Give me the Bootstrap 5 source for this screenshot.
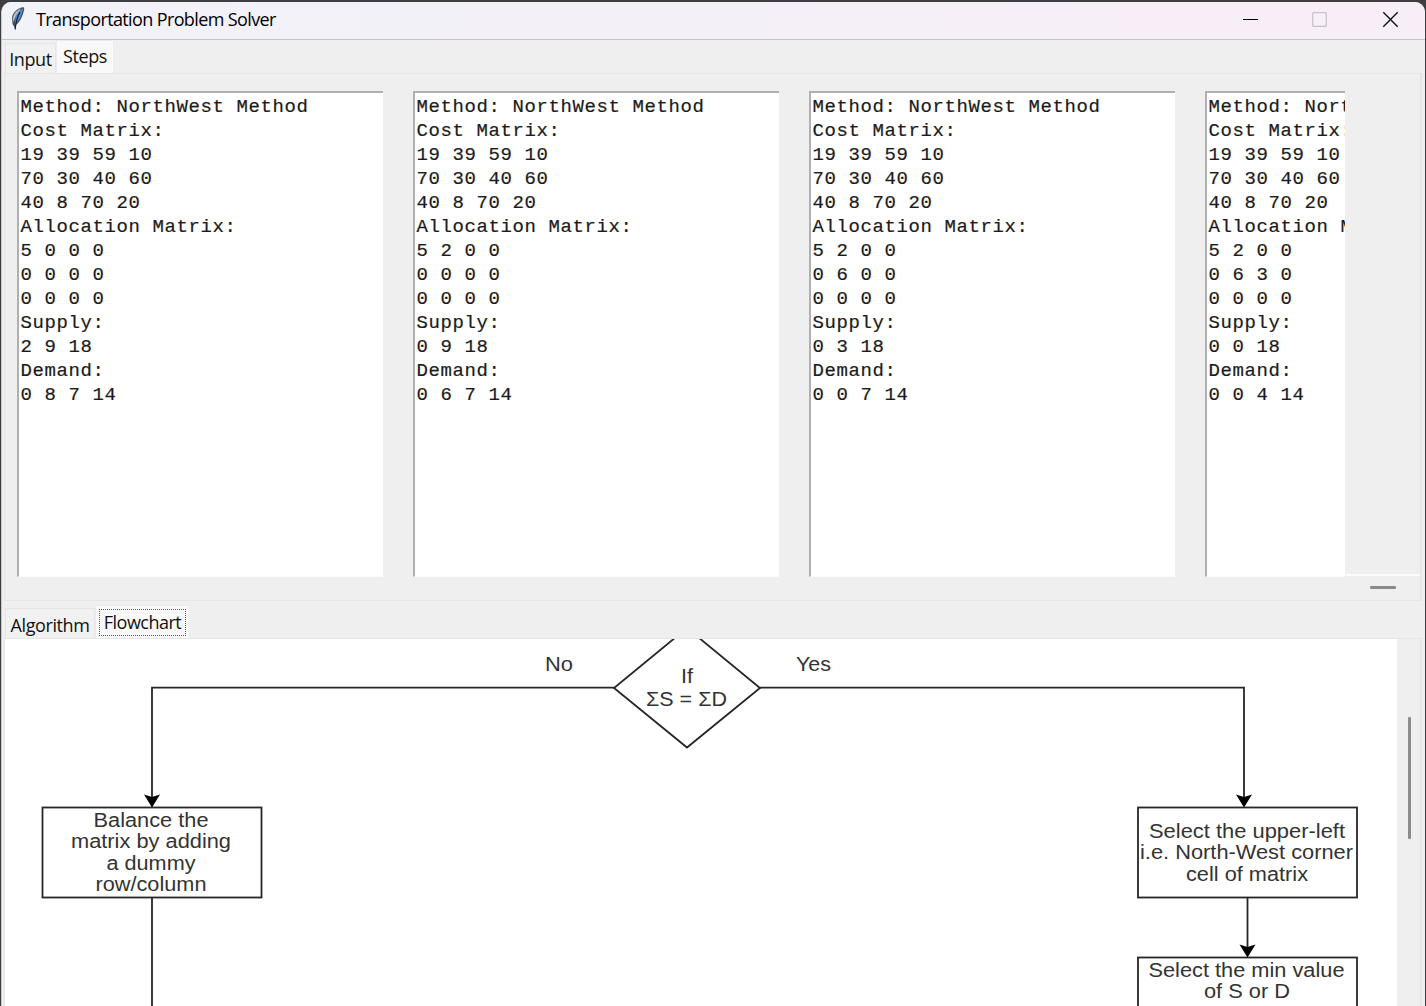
<!DOCTYPE html>
<html lang="en">
<head>
<meta charset="utf-8">
<title>Transportation Problem Solver</title>
<link href="https://cdn.jsdelivr.net/npm/bootstrap@5.3.0/dist/css/bootstrap.min.css" rel="stylesheet">
<style>
body{background:#3e3d3f;height:1006px;width:1426px;font-family:"Open Sans","Noto Sans",sans-serif;color:#111}
.win{margin:2px 1px 0 1px;height:1004px;background:#efefef;border-radius:10px 10px 0 0;border-left:1px solid #c9c9c9}
.titlebar{height:38px;background:linear-gradient(90deg,#f2f2f9 0%,#f4f0f8 50%,#f8eef8 85%);border-bottom:1px solid #c5c2c8;padding-left:7px}
.title-text{font-size:18px;line-height:35px;color:#000;letter-spacing:-.62px;margin-left:9px;white-space:nowrap}
.tabs{padding-left:3px}
.tab-item{border:1px solid #e6e6e6;border-bottom:0;background:#f1f1f1;font-size:18px;letter-spacing:-.4px;white-space:nowrap;text-align:center}
.tab-item.active{background:#f9f9f9;border-color:#ebebeb}
.top-tabs{height:33px}
.top-tabs .tab-item{height:30px;width:51px;line-height:31px}
.top-tabs .active{height:33px;width:58px;line-height:31px}
.steps-pane{height:528px;margin:0 3px 0 2px;border:1px solid #e6e6e6;border-right-width:2px;padding:17px 0 0 12px}
.steps-view{width:1328px;height:486px;gap:30px}
.step-box{width:366px;height:486px;background:#fff;border-top:2px solid #b0b0b0;border-left:2px solid #b0b0b0;border-bottom:1px solid #fafafa;font:19px/24px "Liberation Mono",monospace;letter-spacing:.598px;-webkit-text-stroke:.2px #1b1b1b;padding:2px 0 0 1.5px;margin:0;color:#1b1b1b;overflow:hidden}
.h-track{width:77px;height:485px;border-bottom:2px solid #fbfbfb}
.h-thumb{width:26px;height:3px;border-radius:1px;background:#8a8a8a;margin:9px 0 0 1353px}
.low-tabs{height:37px}
.low-tabs .tab-item{height:30px;width:90px;line-height:33px}
.low-tabs .active{height:33px;width:95px;padding:3px 3px 0 3px;letter-spacing:-.5px}
.focus-box{border:1.500px dotted #333;outline:1px dotted #555;outline-offset:-1px;height:27px;line-height:24px}
.chart-pane{height:368px;margin:0 3px 0 2px;border:1px solid #e6e6e6;border-right-width:2px;border-bottom:0}
.chart-view{width:1392px;height:367px;background:#fff;flex:none}
.v-track{width:24px;padding:78px 0 0 11px}
.v-thumb{width:3px;height:122px;border-radius:1px;background:#8b8b8b}
.chart-view text{font-family:"Liberation Sans",sans-serif;font-size:20px;fill:#333}
</style>
<script src="https://cdn.jsdelivr.net/npm/bootstrap@5.3.0/dist/js/bootstrap.bundle.min.js"></script>
</head>
<body class="overflow-hidden">
<div class="win overflow-hidden d-flex flex-column">
  <header class="titlebar d-flex align-items-start flex-shrink-0">
    <svg width="18" height="30" viewBox="9 2 18 30">
      <path d="M23.500 7C18 8 13 12 12 17.500L12.500 24L15.500 29.500L16 25C20 22 23 16 24.300 9Z" fill="#4a5561"/>
      <path d="M23 8.500C19 10 17 14 15.500 18L15 24C19 21 22 15 23 8.500Z" fill="#4a8ad4"/>
      <path d="M21 8.500C17 10 14 13.500 13 17.500L13 22L16.500 15Z" fill="#b3bfca"/>
      <path d="M20 12Q16 19 15.200 29.500" fill="none" stroke="#17202b" stroke-width="1.200"/>
    </svg>
    <span class="title-text">Transportation Problem Solver</span>
    <svg class="ms-auto" width="184" height="36" viewBox="1241 2 184 36" fill="none">
      <path d="M1243 19.500h15" stroke="#000" stroke-width="1"/>
      <rect x="1312.700" y="12.700" width="13.600" height="13.600" rx="1" stroke="#c5bfc7" stroke-width="1.200"/>
      <path d="M1383.300 12.300l14.400 14.400M1397.700 12.300l-14.400 14.400" stroke="#111" stroke-width="1.400"/>
    </svg>
  </header>
  <nav class="tabs top-tabs d-flex align-items-end flex-shrink-0">
    <div class="tab-item">Input</div>
    <div class="tab-item active">Steps</div>
  </nav>
  <section class="steps-pane flex-shrink-0">
    <div class="d-flex">
      <div class="steps-view d-flex overflow-hidden flex-shrink-0">
<pre class="step-box flex-shrink-0">Method: NorthWest Method
Cost Matrix:
19 39 59 10
70 30 40 60
40 8 70 20
Allocation Matrix:
5 0 0 0
0 0 0 0
0 0 0 0
Supply:
2 9 18
Demand:
0 8 7 14</pre>
<pre class="step-box flex-shrink-0">Method: NorthWest Method
Cost Matrix:
19 39 59 10
70 30 40 60
40 8 70 20
Allocation Matrix:
5 2 0 0
0 0 0 0
0 0 0 0
Supply:
0 9 18
Demand:
0 6 7 14</pre>
<pre class="step-box flex-shrink-0">Method: NorthWest Method
Cost Matrix:
19 39 59 10
70 30 40 60
40 8 70 20
Allocation Matrix:
5 2 0 0
0 6 0 0
0 0 0 0
Supply:
0 3 18
Demand:
0 0 7 14</pre>
<pre class="step-box flex-shrink-0">Method: NorthWest Method
Cost Matrix:
19 39 59 10
70 30 40 60
40 8 70 20
Allocation Matrix:
5 2 0 0
0 6 3 0
0 0 0 0
Supply:
0 0 18
Demand:
0 0 4 14</pre>
      </div>
      <div class="h-track"></div>
    </div>
    <div class="h-thumb"></div>
  </section>
  <nav class="tabs low-tabs d-flex align-items-end flex-shrink-0">
    <div class="tab-item">Algorithm</div>
    <div class="tab-item active"><div class="focus-box">Flowchart</div></div>
  </nav>
  <section class="chart-pane d-flex">
    <svg class="chart-view" viewBox="5 639 1392 367">
      <g fill="none" stroke="#262626" stroke-width="1.800">
        <path d="M687 628L760 688L687 747.500L614 688Z"/>
        <path d="M614 687.700H152V797M760 687.700H1244V797M152 898V1010M1247.500 898V947"/>
        <rect x="42.500" y="807.500" width="219" height="90"/>
        <rect x="1138" y="807.500" width="219" height="90"/>
        <rect x="1138" y="957.500" width="219" height="90"/>
      </g>
      <g fill="#000">
        <path d="M144 794.500L152 797L160 794.500L152 807.500Z"/>
        <path d="M1236 794.500L1244 797L1252 794.500L1244 807.500Z"/>
        <path d="M1239.500 944.500L1247.500 947L1255.500 944.500L1247.500 957.500Z"/>
      </g>
      <text x="545" y="670.500" textLength="28" lengthAdjust="spacingAndGlyphs">No</text>
      <text x="796" y="670.500" textLength="35" lengthAdjust="spacingAndGlyphs">Yes</text>
      <text x="681" y="682.500" textLength="12" lengthAdjust="spacingAndGlyphs">If</text>
      <text x="646" y="705.500" textLength="81" lengthAdjust="spacingAndGlyphs">ΣS = ΣD</text>
      <text x="93.500" y="826.500" textLength="115" lengthAdjust="spacingAndGlyphs">Balance the</text>
      <text x="71" y="848" textLength="160" lengthAdjust="spacingAndGlyphs">matrix by adding</text>
      <text x="106.500" y="870" textLength="89" lengthAdjust="spacingAndGlyphs">a dummy</text>
      <text x="95.500" y="891" textLength="111" lengthAdjust="spacingAndGlyphs">row/column</text>
      <text x="1149" y="837.500" textLength="196" lengthAdjust="spacingAndGlyphs">Select the upper-left</text>
      <text x="1140" y="858.500" textLength="213" lengthAdjust="spacingAndGlyphs">i.e. North-West corner</text>
      <text x="1186" y="880.500" textLength="122" lengthAdjust="spacingAndGlyphs">cell of matrix</text>
      <text x="1148.500" y="976.500" textLength="196" lengthAdjust="spacingAndGlyphs">Select the min value</text>
      <text x="1204" y="997.500" textLength="86" lengthAdjust="spacingAndGlyphs">of S or D</text>
    </svg>
    <div class="v-track"><div class="v-thumb"></div></div>
  </section>
</div>
</body>
</html>
